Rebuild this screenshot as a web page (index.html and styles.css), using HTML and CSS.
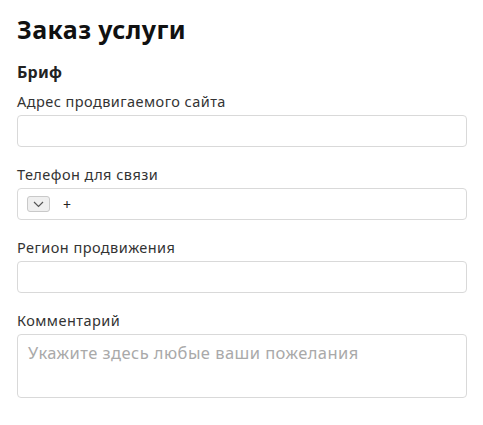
FILE: index.html
```html
<!DOCTYPE html>
<html lang="ru">
<head>
<meta charset="utf-8">
<link rel="stylesheet" href="styles.css">
</head>
<body>
<div class="page">
  <h1 class="title">Заказ услуги</h1>
  <h2 class="subtitle">Бриф</h2>
  <div class="field">
    <label class="label">Адрес продвигаемого сайта</label>
    <div class="input"></div>
  </div>
  <div class="field">
    <label class="label">Телефон для связи</label>
    <div class="input phone">
      <span class="flag-select">
        <svg width="11" height="7" viewBox="0 0 11 7"><path d="M1 1l4.5 4.5L10 1" fill="none" stroke="#555" stroke-width="1.2"/></svg>
      </span>
      <span class="plus">+</span>
    </div>
  </div>
  <div class="field">
    <label class="label">Регион продвижения</label>
    <div class="input"></div>
  </div>
  <div class="field">
    <label class="label">Комментарий</label>
    <div class="input textarea"><span class="placeholder">Укажите здесь любые ваши пожелания</span></div>
  </div>
</div>
</body>
</html>
```
FILE: styles.css
```css
html, body { margin: 0; padding: 0; background: #fff; }
body { font-family: "Noto Sans", "Open Sans", sans-serif; color: #222; }
.page { padding: 12px 17px 0 17px; width: 450px; display: flex; flex-direction: column; }
.title { margin: 0; font-size: 25px; font-weight: 700; line-height: 34px; color: #111; letter-spacing: 0.4px; }
.subtitle { margin: 15px 0 0 0; font-size: 16px; font-weight: 700; line-height: 22px; color: #222; letter-spacing: 0.2px; }
.field { display: flex; flex-direction: column; margin-top: 8px; }
.field + .field { margin-top: 17px; }
.label { font-size: 14.5px; line-height: 20px; color: #333; margin-bottom: 4px; letter-spacing: 0.45px; }
.input { box-sizing: border-box; height: 32px; border: 1px solid #d9d9d9; border-radius: 4px; background: #fff; }
.phone { display: flex; align-items: center; padding-left: 9px; }
.flag-select { box-sizing: border-box; width: 23px; height: 16px; background: #efefef; border: 1px solid #c9c9c9; border-radius: 3px; display: flex; align-items: center; justify-content: center; }
.plus { margin-left: 13px; font-size: 14px; color: #222; }
.textarea { height: 64px; padding: 7px 10px; }
.placeholder { font-size: 16.5px; line-height: 20px; color: #a9a9a9; letter-spacing: 0.45px; }
```
